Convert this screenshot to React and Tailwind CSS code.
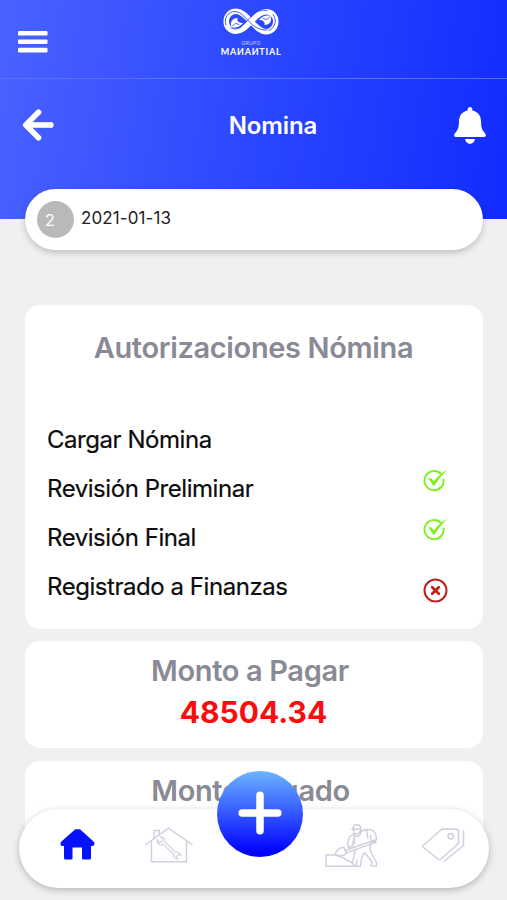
import React from 'react';

const steps = [
  { label: 'Cargar Nómina', status: null },
  { label: 'Revisión Preliminar', status: 'ok' },
  { label: 'Revisión Final', status: 'ok' },
  { label: 'Registrado a Finanzas', status: 'error' },
];

const Logo = () => (
  <div className="flex flex-col items-center text-white">
    <svg width="56" height="27" viewBox="0 0 56 27" fill="none" strokeLinecap="round">
      <path d="M28 13.500C22 7 18 3.200 13 3.200C7 3.200 3.200 8 3.200 13.500C3.200 19 7 23.300 13 23.300C19 23.300 23 18.500 28 13.500C33 8.500 37 3.700 43 3.700C49 3.700 52.800 8 52.800 13.500C52.800 19 49 23.800 43 23.800C38 23.800 34 20 28 13.500Z" stroke="white" strokeWidth="5.500" />
      <path d="M8 20C10 21.500 15 21.500 18 19C22 15.500 26 10 30 6.500C34 3 39 1.500 44 2.500" stroke="#2c48ff" strokeWidth="0.900" />
      <path d="M3 17C0.500 10 5 3.500 12 3.500C19 4 23 11 28 15.500C32 19.500 38 22.500 44 22" stroke="#2c48ff" strokeWidth="0.900" />
      <path d="M50 6.500C54.500 12 52 20 46 22.500" stroke="#2c48ff" strokeWidth="0.900" />
      <path d="M8.500 19C6.500 14 9.500 10 14.500 10C13.500 13 16 15 20 15C17.500 18.500 13 20.500 8.500 19Z" fill="white" />
      <path d="M47.500 8C49.500 13 46.500 17 41.500 17C42.500 14 40 12 36 12C38.500 8.500 43 6.500 47.500 8Z" fill="white" />
      <path d="M9.500 18C11 15.500 13 15 16 16.500M46.500 9C45 11.500 43 12 40 10.500" stroke="#2c48ff" strokeWidth="0.900" />
    </svg>
    <span className="mt-[5px] text-[5px] leading-[6px] tracking-[0.3px] opacity-70">GRUPO</span>
    <span className="text-[9px] leading-[11px] font-bold tracking-[0.75px] font-['Lato',sans-serif]">MAИAИTIAL</span>
  </div>
);

const MenuIcon = () => (
  <svg width="30" height="22" viewBox="0 0 30 22" fill="white">
    <rect x="0" y="0" width="29.500" height="4.600" rx="1.200" />
    <rect x="0" y="8.400" width="29.500" height="4.600" rx="1.200" />
    <rect x="0" y="16.800" width="29.500" height="4.600" rx="1.200" />
  </svg>
);

const BackIcon = () => (
  <svg width="33" height="32" viewBox="0 0 33 32" fill="none" stroke="white" strokeWidth="5.600">
    <path d="M16.500 3.300L3.800 16L16.500 28.700" strokeLinecap="round" strokeLinejoin="round" />
    <path d="M4 16H30" />
    <path d="M29.500 15.200V16.800" strokeLinecap="round" strokeWidth="4" />
  </svg>
);

const BellIcon = () => (
  <svg width="32" height="37" viewBox="0 0 32 37" fill="white">
    <path d="M16 0C14.500 0 13.700 1 13.700 2.300V3.500C8 4.700 5 9 5 14C5 21 3.500 23.500 1.200 26C-0.500 28 0 30 2 30H30C32 30 32.500 28 30.800 26C28.500 23.500 27 21 27 14C27 9 24 4.700 18.300 3.500V2.300C18.300 1 17.500 0 16 0Z" />
    <path d="M11 32H21C20.500 35 18.500 36.800 16 36.800C13.500 36.800 11.500 35 11 32Z" />
  </svg>
);

const CheckIcon = () => (
  <svg width="25" height="23" viewBox="0 0 25 23" fill="none" stroke="#7df01c">
    <path d="M18.200 5.200A9.600 9.600 0 1 0 20.500 9.800" strokeWidth="1.900" />
    <path d="M5 9.500L8.300 9.200L11 12.500C14 8 18 4 24.500 0.500C19 6 15 11 11.500 16.500L10 16.500C8.500 13.500 7 11.500 5 9.500Z" fill="#7df01c" stroke="none" />
  </svg>
);

const ErrorIcon = () => (
  <svg width="25" height="25" viewBox="0 0 25 25" fill="none" stroke="#c0211c">
    <circle cx="12.500" cy="12.500" r="11" strokeWidth="2" />
    <path d="M9.200 9.200L15.800 15.800M15.800 9.200L9.200 15.800" strokeWidth="2.800" strokeLinecap="round" />
  </svg>
);

const HomeIcon = () => (
  <svg width="35" height="31" viewBox="0 0 35 31" fill="#0510ff">
    <path d="M15.300 0.300H20L33.500 12.500C35 14 34.600 17 32.500 17H31V29Q31 30.500 29.500 30.500H23.500Q22 30.500 22 29V18.500H12.500V29Q12.500 30.500 11 30.500H5.500Q4 30.500 4 29V17H2.300C0.200 17 0 14 1.400 12.500Z" />
  </svg>
);

const RepairIcon = () => (
  <svg width="48" height="36" viewBox="0 0 48 36" fill="none" stroke="#cdcfdd" strokeWidth="1.400" strokeLinecap="round">
    <path d="M0.800 17.500L23.500 1.200L47 17.500" />
    <path d="M6.500 14.500V34.800H41.500V14.500M9 11V3.500H14.300V7" />
    <path d="M12 13L14.800 15.500L17.500 14L17 11L15.500 10C18.500 9.500 20.500 12 19.800 15L30.500 25.200C33 24.500 35.500 26 36 28.500L33.500 27.500L31.300 29.500L33 32C30 32 28 29.800 28.500 27L17.800 17.200C15 18.800 11.800 16.500 12 13Z" strokeWidth="1.100" />
  </svg>
);

const WorkerIcon = () => (
  <svg width="53" height="44" viewBox="0 0 53 44" fill="none" stroke="#cdcfdd" strokeWidth="1.400" strokeLinejoin="round" strokeLinecap="round">
    <path d="M27.500 5.500C27.500 2.500 29.500 0.800 32 0.800C34.500 0.800 35.800 2.500 35.800 5H26.800" />
    <path d="M28.800 5.500V8C29 10 32 10.500 34 9.200C35.300 8 35.800 6.500 35.800 5" />
    <path d="M29 9.500L24.500 13L22.500 19.500L23.500 23.500L28 21.500L27.500 18.500L29 15.500" />
    <path d="M35 8.500C38 5.800 42 5 46 5.800C49 6.500 51 10 51.500 14.500L50.500 17.500L46.500 18L45.500 11.500" />
    <path d="M29 10L29.500 19.500M36 8.500C35.500 12 33 13 30 12M41.500 6L43 14.500" />
    <path d="M20 26.500L50 16M21 28.800L51 18.300" />
    <path d="M10 30.500C11.500 26 15 23 19 23.500L21.500 29C20 32 14 32.500 10 30.500Z" />
    <path d="M1 31H11C14 34 18 32 20 35C22 38 27 36 29.500 42.300H1V31Z" />
    <path d="M30.500 26C29.500 31 28 34 27.500 38.500M31 42.300H35.500C35.500 36 37 32 39.500 28.500L47 38L46 42H51.500V38.500L45 26V19.500" />
    <path d="M31 42.300L32 36" />
  </svg>
);

const TagsIcon = () => (
  <svg width="43" height="34" viewBox="0 0 43 34" fill="none" stroke="#cdcfdd" strokeWidth="1.500" strokeLinejoin="round" strokeLinecap="round">
    <path d="M20 1L34 1.200Q36.500 1.300 36.500 3.500V15.500L19 31Q17.500 32 16 31L1.500 19.500Q0.500 18.500 1.500 17.200Z" />
    <circle cx="28.700" cy="8.300" r="2.700" />
    <path d="M41.500 3V17.500L22.500 33" />
  </svg>
);

const Card = ({ className, children }) => (
  <div className={`rounded-[15px] bg-white ${className}`}>{children}</div>
);

const Title = ({ children }) => (
  <h2 className="text-[29px] leading-[36px] font-semibold tracking-[-0.35px] text-[#898a95]">{children}</h2>
);

const Payroll = () => {
  return (
    <div className="relative flex h-[900px] w-[507px] flex-col overflow-hidden bg-[#f0f0f0] font-['Inter',sans-serif]">
      <header className="h-[219px] shrink-0 bg-linear-[98deg,#4a62ff_0%,#2c47ff_50%,#122bff_100%] text-white">
        <div className="grid h-[79px] grid-cols-3 border-b border-[#5870ff]">
          <div className="pt-[31px] pl-[18px]"><MenuIcon /></div>
          <div className="flex justify-center pt-[8px] pr-[5px]"><Logo /></div>
        </div>
        <div className="grid h-[92px] grid-cols-[1fr_auto_1fr] items-center pr-[21px] pl-[22px]">
          <BackIcon />
          <h1 className="pt-[2px] pl-[38px] text-[24px] font-semibold tracking-[-0.1px]">Nomina</h1>
          <div className="flex justify-end"><BellIcon /></div>
        </div>
      </header>

      <main className="flex flex-col px-[25px]">
        <div className="relative mt-[-30px] mr-[-1px] flex h-[61px] items-center rounded-full bg-white pl-[12px] shadow-[0_3px_6px_rgba(0,0,0,0.2)]">
          <div className="flex h-[37px] w-[37px] items-center rounded-full bg-[#b9b9b9] pl-[8px] text-[16px] text-white">2</div>
          <span className="pb-[1px] pl-[7px] text-[17px] tracking-[0.1px] text-[#222]">2021-01-13</span>
        </div>

        <Card className="mt-[55px] mr-[-1px] h-[324px] pt-[25px]">
          <div className="pr-[1px] text-center"><Title>Autorizaciones Nómina</Title></div>
          <div className="mt-[49px] flex flex-col pr-[35px] pl-[22px]">
            {steps.map((step) => (
              <div key={step.label} className="flex h-[49px] items-center justify-between">
                <span className="pt-[1px] text-[24px] tracking-[-0.45px] text-[#0c0c0c] [-webkit-text-stroke:0.2px_#0c0c0c]">{step.label}</span>
                {step.status === 'ok' && <div className="pb-[16px]"><CheckIcon /></div>}
                {step.status === 'error' && <div className="pt-[7px]"><ErrorIcon /></div>}
              </div>
            ))}
          </div>
        </Card>

        <Card className="mt-[12px] mr-[-1px] h-[107px] pt-[12px] text-center">
          <div className="pr-[8px]"><Title>Monto a Pagar</Title></div>
          <p className="pr-[1px] text-[30px] leading-[46px] font-bold text-[#fb0d0d]">48504.34</p>
        </Card>

        <Card className="mt-[13px] mr-[-1px] h-[107px] pt-[12px] text-center">
          <div className="pr-[7px]"><Title>Monto Pagado</Title></div>
        </Card>
      </main>

      <nav className="absolute top-[809px] left-[19px] flex h-[79px] w-[470px] rounded-full bg-white shadow-[0_2px_7px_rgba(0,0,0,0.25)]">
        <div className="pt-[20px] pl-[41px]"><HomeIcon /></div>
        <div className="pt-[18px] pl-[50px]"><RepairIcon /></div>
        <div className="pt-[15px] pl-[132px]"><WorkerIcon /></div>
        <div className="pt-[19px] pl-[44px]"><TagsIcon /></div>
      </nav>
      <button className="absolute top-[771px] left-[217px] flex h-[86px] w-[86px] items-center justify-center rounded-full bg-[linear-gradient(180deg,#6bb5ff_0%,#0000ff_95%)] pr-[1px] pb-[3px]">
        <svg width="44" height="44" viewBox="0 0 44 44" stroke="white" strokeWidth="7.500" strokeLinecap="round">
          <path d="M22 4.200V39.800M4.200 22H39.800" />
        </svg>
      </button>
    </div>
  );
};

export default Payroll;
